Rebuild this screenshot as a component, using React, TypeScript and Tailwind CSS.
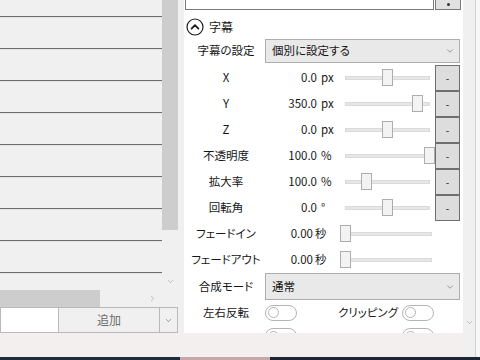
import { ChevronDown, ChevronRight } from 'lucide-react';

const sliderRows = [
  { label: 'X', value: '0.0', unit: 'px', thumb: 'left-[38px]' },
  { label: 'Y', value: '350.0', unit: 'px', thumb: 'left-[68px]' },
  { label: 'Z', value: '0.0', unit: 'px', thumb: 'left-[38px]' },
  { label: '不透明度', value: '100.0', unit: '%', thumb: 'left-[80px]' },
  { label: '拡大率', value: '100.0', unit: '%', thumb: 'left-[17px]' },
  { label: '回転角', value: '0.0', unit: '°', thumb: 'left-[38px]' },
];

const fadeRows = [
  { label: 'フェードイン', value: '0.00', unit: '秒' },
  { label: 'フェードアウト', value: '0.00', unit: '秒' },
];

function Label({ children }: { children: React.ReactNode }) {
  return <div className="w-[81px] pl-[6px] pr-[3px] text-center whitespace-nowrap">{children}</div>;
}

function Toggle() {
  return (
    <div className="w-[32px] h-[16px] shrink-0 rounded-full border border-[#b4b4b4] bg-white flex items-center pl-[2px]">
      <div className="w-[11px] h-[11px] rounded-full border border-[#b4b4b4]" />
    </div>
  );
}

function Select({ text, h }: { text: string; h: string }) {
  return (
    <div className={`w-[195px] ${h} bg-[#e9e9e9] border border-[#adadad] flex items-center justify-between pl-[6px] pr-[4px]`}>
      <span>{text}</span>
      <ChevronDown className="w-[10px] h-[10px] text-[#6e6e6e]" strokeWidth={1.6} />
    </div>
  );
}

export default function App() {
  return (
    <div className="w-[480px] h-[360px] overflow-hidden bg-[#f0f0f0] flex flex-col text-[11.5px] leading-none text-[#161616] [font-feature-settings:'palt'] font-['Noto_Sans_CJK_JP','Noto_Sans',sans-serif]">
      <div className="flex h-[357px]">
        {/* ── Left list panel ── */}
        <div className="w-[178px] flex flex-col">
          <div className="flex h-[290px]">
            <div className="w-[162px] pt-[16px] overflow-hidden">
              {Array.from({ length: 9 }).map((_, i) => (
                <div key={i} className="h-[32px] border-t border-[#6d6d6d] shadow-[inset_0_1px_0_#e4e4e4]" />
              ))}
            </div>
            <div className="w-[16px] flex flex-col">
              <div className="h-[230px] bg-[#cdcdcd]" />
              <div className="flex-1 flex items-end justify-center pb-[4px]">
                <ChevronDown className="w-[9px] h-[9px] text-[#9a9a9a]" strokeWidth={1.6} />
              </div>
            </div>
          </div>
          <div className="h-[17px] flex">
            <div className="w-[100px] bg-[#cdcdcd]" />
            <div className="flex-1 flex items-center justify-end pr-[21px]">
              <ChevronRight className="w-[9px] h-[9px] text-[#9a9a9a]" strokeWidth={1.6} />
            </div>
          </div>
          <div className="h-[26px] flex">
            <div className="w-[59px] bg-white border border-[#b9b9b9]" />
            <div className="w-[101px] bg-[#f0f0f0] border border-[#b9b9b9] border-l-0 flex items-center justify-center text-[#6d6d6d] text-[12px]">
              追加
            </div>
            <div className="w-[18px] bg-[#f0f0f0] border border-[#b9b9b9] border-l-0 flex items-center justify-center">
              <ChevronDown className="w-[9px] h-[9px] text-[#6e6e6e]" strokeWidth={1.8} />
            </div>
          </div>
          <div className="flex-1 bg-[#f2efee]" />
        </div>

        <div className="w-[6px] flex flex-col">
          <div className="h-[333px]" />
          <div className="flex-1 bg-[#f2efee]" />
        </div>

        {/* ── Right property panel ── */}
        <div className="w-[279px] flex flex-col">
          <div className="h-[333px] bg-white overflow-hidden flex flex-col">
            <div className="h-[10px] flex shrink-0">
              <div className="ml-[1px] w-[249px] border-x border-b border-[#7a7a7a] bg-white" />
              <div className="ml-[1px] w-[26px] bg-[#e1e1e1] border border-t-0 border-[#7a7a7a] flex items-center justify-center">
                <div className="w-[3px] h-[3px] rounded-full bg-[#333]" />
              </div>
            </div>

            <div className="h-[29px] shrink-0 flex items-center pt-[5px] pl-[2px]">
              <svg width="18" height="18" viewBox="0 0 18 18" fill="none">
                <circle cx="9" cy="9" r="8" stroke="#1b1b1b" strokeWidth="1.2" />
                <path d="M5.6 10.6 L9 7.2 L12.4 10.6" stroke="#1b1b1b" strokeWidth="1.8" strokeLinecap="round" strokeLinejoin="round" />
              </svg>
              <span className="ml-[5px] text-[12px]">字幕</span>
            </div>

            <div className="h-[24px] shrink-0 flex items-center">
              <Label>字幕の設定</Label>
              <Select text="個別に設定する" h="h-[24px]" />
            </div>

            <div className="mt-[2px] flex flex-col">
              {sliderRows.map((r) => (
                <div key={r.label} className="h-[26px] shrink-0 flex items-center">
                  <Label>{r.label}</Label>
                  <div className="w-[52px] text-right">{r.value}</div>
                  <div className="w-[27px] pl-[4px]">{r.unit}</div>
                  <div className="w-[86px] h-[26px] relative flex items-center">
                    <div className="ml-[1px] w-[85px] h-[4px] bg-[#e7e7e7] border border-[#dadada]" />
                    <div className={`absolute top-[4px] ${r.thumb} w-[11px] h-[17px] bg-[#f3f3f3] border border-[#adadad]`} />
                  </div>
                  <div className="ml-[5px] w-[25px] h-[26px] bg-[#dddddd] border border-[#6f6f6f] flex items-center justify-center text-[10px]">
                    -
                  </div>
                </div>
              ))}
            </div>

            {fadeRows.map((r) => (
              <div key={r.label} className="h-[26px] shrink-0 flex items-center">
                <Label>{r.label}</Label>
                <div className="w-[48px] text-right">{r.value}</div>
                <div className="w-[27px] pl-[2px]">{r.unit}</div>
                <div className="w-[92px] h-[26px] relative flex items-center">
                  <div className="w-[92px] h-[4px] bg-[#e7e7e7] border border-[#dadada]" />
                  <div className="absolute top-[4px] left-0 w-[11px] h-[17px] bg-[#f3f3f3] border border-[#adadad]" />
                </div>
              </div>
            ))}

            <div className="h-[27px] shrink-0 flex items-center">
              <Label>合成モード</Label>
              <Select text="通常" h="h-[27px]" />
            </div>

            <div className="h-[25px] shrink-0 flex items-center">
              <Label>左右反転</Label>
              <Toggle />
              <div className="ml-[41px] w-[64px] whitespace-nowrap">クリッピング</div>
              <Toggle />
            </div>

            <div className="h-[20px] shrink-0 flex items-start pt-[3px]">
              <div className="w-[81px]" />
              <Toggle />
              <div className="ml-[105px]">
                <Toggle />
              </div>
            </div>
          </div>
          <div className="flex-1 bg-[#f2efee]" />
        </div>

        {/* ── Outer scrollbar + window edge ── */}
        <div className="w-[12px] bg-[#f0f0f0] flex flex-col justify-end items-center pb-[30px]">
          <ChevronDown className="w-[9px] h-[9px] text-[#9a9a9a]" strokeWidth={1.6} />
        </div>
        <div className="w-[1px] bg-[#d2d2d2]" />
        <div className="flex-1 bg-[#f7f7f7]" />
      </div>
      <div className="flex-1 flex">
        <div className="w-[180px] bg-[#1f2a3a]" />
        <div className="w-[90px] bg-[#c9a6a8]" />
        <div className="flex-1 bg-[#1c2636]" />
      </div>
    </div>
  );
}
